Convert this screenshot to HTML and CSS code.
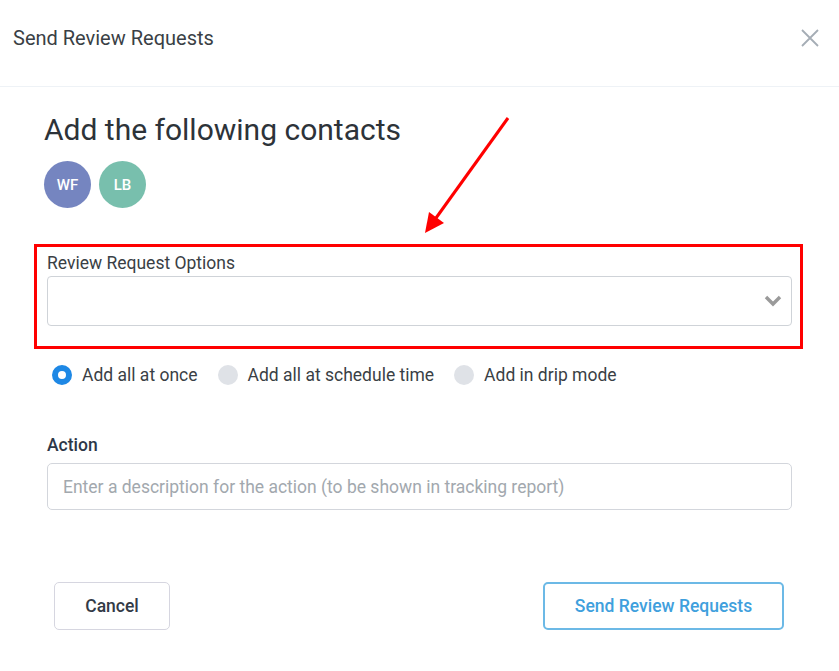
FILE: index.html
```html
<!DOCTYPE html>
<html lang="en">
<head>
    <meta charset="UTF-8">
    <title>Send Review Requests</title>
    <link rel="stylesheet" href="styles.css">
</head>
<body>
    <div class="modal">
        <div class="modal-header">
            <span class="modal-title">Send Review Requests</span>
            <svg class="close" width="18" height="18" viewBox="0 0 18 18">
                <path d="M1 1 L17 17 M17 1 L1 17" stroke="#a5adb5" stroke-width="1.8" fill="none"/>
            </svg>
        </div>
        <div class="modal-body">
            <h2>Add the following contacts</h2>
            <div class="avatars">
                <div class="avatar wf">WF</div>
                <div class="avatar lb">LB</div>
            </div>

            <div class="highlight">
                <label class="field-label">Review Request Options</label>
                <div class="select">
                    <svg width="18" height="12" viewBox="0 0 18 12">
                        <path d="M2 2 L9 9 L16 2" stroke="#9a9a9a" stroke-width="3.4" fill="none"/>
                    </svg>
                </div>
            </div>

            <div class="radios">
                <label class="radio"><span class="dot checked"></span>Add all at once</label>
                <label class="radio"><span class="dot"></span>Add all at schedule time</label>
                <label class="radio"><span class="dot"></span>Add in drip mode</label>
            </div>

            <label class="action-label">Action</label>
            <input type="text" class="action-input" placeholder="Enter a description for the action (to be shown in tracking report)">

            <div class="footer">
                <button class="btn cancel">Cancel</button>
                <button class="btn send">Send Review Requests</button>
            </div>
        </div>

        <!-- annotation arrow pointing at the highlighted field -->
        <svg class="arrow" width="120" height="140" viewBox="0 0 120 140">
            <line x1="98" y1="11" x2="26" y2="111" stroke="#ff0000" stroke-width="3"/>
            <polygon points="15,126 19,105 34,116" fill="#ff0000"/>
        </svg>
    </div>
</body>
</html>
```

FILE: styles.css
```css
body {
    margin: 0;
    background-color: #fff;
    font-family: Roboto, "Liberation Sans", sans-serif;
    color: #2d3339;
}
.modal {
    position: relative;
    width: 839px;
    height: 671px;
}
.modal-header {
    display: flex;
    align-items: center;
    justify-content: space-between;
    padding: 0 20px 0 13px;
    border-bottom: 1px solid #eef2f6;
    box-sizing: border-box;
    margin-top: -10px;
    height: 97px;
}
.modal-title {
    font-size: 20px;
    color: #3a3f45;
}
.modal-body {
    padding: 22px 47px 0 47px;
}
h2 {
    margin: 0 0 0 -3px;
    font-size: 30px;
    font-weight: 400;
    line-height: 42px;
    color: #2d3339;
}
.avatars {
    display: flex;
    gap: 8px;
    margin: 10px 0 0 -3px;
}
.avatar {
    width: 47px;
    height: 47px;
    border-radius: 50%;
    color: #fff;
    font-size: 15px;
    font-weight: 500;
    display: flex;
    align-items: center;
    justify-content: center;
}
.wf { background-color: #7585c0; }
.lb { background-color: #78bfad; }
.highlight {
    margin: 36px -11px 0 -13px;
    height: 105px;
    border: 3px solid #ff0000;
    box-sizing: border-box;
    padding: 5px 8px 0 10px;
}
.field-label {
    display: block;
    font-size: 17.5px;
    color: #3a3f45;
    line-height: 22px;
    margin-bottom: 2px;
}
.select {
    height: 50px;
    border: 1px solid #cfd3d8;
    border-radius: 4px;
    box-sizing: border-box;
    display: flex;
    align-items: center;
    justify-content: flex-end;
    padding-right: 9px;
}
.radios {
    display: flex;
    gap: 20px;
    margin: 16px 0 0 5px;
}
.radio {
    display: flex;
    align-items: center;
    font-size: 17.5px;
    color: #3a3f45;
}
.dot {
    width: 20px;
    height: 20px;
    border-radius: 50%;
    background-color: #dfe2e7;
    margin-right: 10px;
    box-sizing: border-box;
}
.dot.checked {
    background-color: #fff;
    border: 6px solid #1e88e5;
}
.action-label {
    display: block;
    margin-top: 50px;
    font-size: 17.5px;
    font-weight: 500;
    color: #2d3748;
}
.action-input {
    display: block;
    width: 100%;
    height: 47px;
    margin-top: 8px;
    border: 1px solid #d3d6dc;
    border-radius: 5px;
    box-sizing: border-box;
    padding: 0 15px;
    font-family: inherit;
    font-size: 17.5px;
}
.action-input::placeholder {
    color: #a2a8ae;
}
.footer {
    display: flex;
    justify-content: space-between;
    margin: 72px 8px 0 7px;
}
.btn {
    height: 48px;
    border-radius: 5px;
    background-color: #fff;
    font-family: inherit;
    font-size: 17.5px;
    font-weight: 500;
    cursor: pointer;
}
.cancel {
    width: 116px;
    border: 1px solid #d6d6e0;
    color: #333a46;
}
.send {
    width: 241px;
    border: 2px solid #6cb9e6;
    color: #3fa0dd;
}
.arrow {
    position: absolute;
    left: 410px;
    top: 117px;
}
```
